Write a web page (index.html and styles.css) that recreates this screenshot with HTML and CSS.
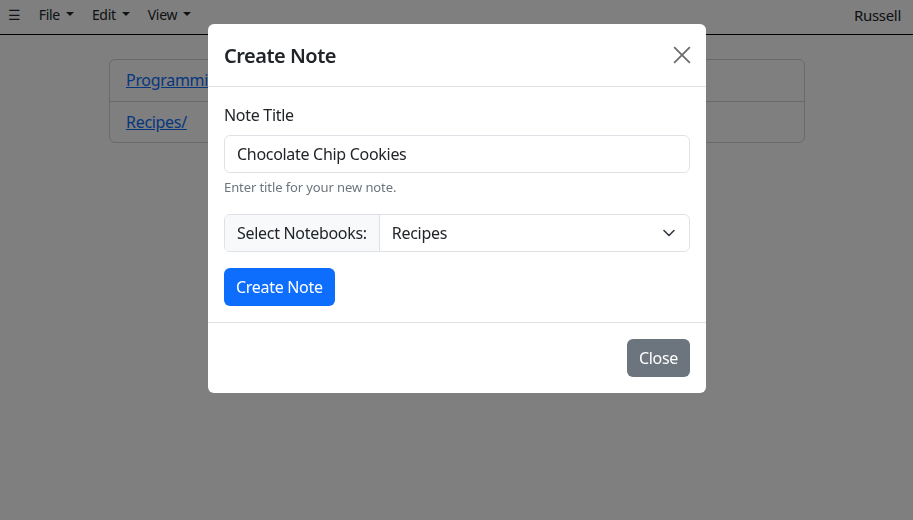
FILE: index.html
```html
<!DOCTYPE html>
<html>
<head>
<meta charset="utf-8">
<link rel="stylesheet" href="styles.css">
</head>
<body>
<nav class="topbar">
  <div class="menus">
    <span class="burger">☰</span>
    <span class="menu">File<span class="caret"></span></span>
    <span class="menu">Edit<span class="caret"></span></span>
    <span class="menu">View<span class="caret"></span></span>
  </div>
  <span class="user">Russell</span>
</nav>
<main class="content">
  <ul class="list">
    <li class="item"><a href="#">Programming/</a></li>
    <li class="item"><a href="#">Recipes/</a></li>
  </ul>
</main>
<div class="backdrop"></div>
<div class="modal">
  <div class="dialog">
    <div class="mhead">
      <h5 class="mtitle">Create Note</h5>
      <button class="xbtn" aria-label="Close">
        <svg width="16" height="16" viewBox="0 0 16 16"><path d="M1 1L15 15M15 1L1 15" stroke="#6c6c6c" stroke-width="1.6" fill="none"/></svg>
      </button>
    </div>
    <div class="mbody">
      <label class="flabel">Note Title</label>
      <div class="input">Chocolate Chip Cookies</div>
      <div class="ftext">Enter title for your new note.</div>
      <div class="igroup">
        <span class="igtext">Select Notebooks:</span>
        <span class="select">Recipes
          <svg class="chev" width="12" height="8" viewBox="0 0 12 8"><path d="M1 1.5l5 5 5-5" stroke="#343a40" stroke-width="1.6" fill="none" stroke-linecap="round" stroke-linejoin="round"/></svg>
        </span>
      </div>
      <button class="btn primary">Create Note</button>
    </div>
    <div class="mfoot">
      <button class="btn secondary">Close</button>
    </div>
  </div>
</div>
</body>
</html>
```
FILE: styles.css
```css
* { box-sizing: border-box; }
body {
  margin: 0;
  font-family: "Noto Sans", "Open Sans", sans-serif;
  font-size: 16px;
  letter-spacing: -0.3px;
  color: #212529;
  background: #fff;
  height: 520px;
}
.topbar {
  height: 35px;
  border-bottom: 1px solid #000;
  display: flex;
  align-items: flex-start;
  justify-content: space-between;
  padding: 4px 12px 0 8px;
  line-height: 22px;
}
.menus { display: flex; align-items: center; font-size: 14px; }
.burger { font-size: 14px; margin-right: 18px; }
.menu { display: inline-flex; align-items: center; margin-right: 18px; }
.caret {
  display: inline-block;
  margin-left: 6px;
  border-top: 4px solid #212529;
  border-left: 4px solid transparent;
  border-right: 4px solid transparent;
  margin-top: -2px;
}
.user { font-size: 15px; }
.content { padding: 24px 108px 0 109px; }
.list {
  list-style: none;
  margin: 0;
  padding: 0;
  border: 1px solid rgba(0,0,0,.175);
  border-radius: 6px;
}
.item { padding: 9px 16px 7px; height: 41px; }
.item + .item { border-top: 1px solid rgba(0,0,0,.175); }
.item a { color: #0d6efd; }
.backdrop {
  position: fixed;
  inset: 0;
  background: rgba(0,0,0,.5);
}
.modal {
  position: fixed;
  top: 24px;
  left: 208px;
  width: 498px;
}
.dialog {
  background: #fff;
  border-radius: 6px;
  overflow: hidden;
}
.mhead {
  height: 63px;
  display: flex;
  align-items: center;
  justify-content: space-between;
  padding: 2px 16px 0;
  border-bottom: 1px solid #dee2e6;
}
.mtitle { margin: 0; font-size: 20px; font-weight: 600; line-height: 30px; letter-spacing: -0.5px; }
.xbtn {
  border: 0; background: none; padding: 0; width: 32px; height: 32px;
  display: flex; align-items: center; justify-content: center; margin-right: -8px; margin-top: -2px;
}
.xbtn svg { width: 18px; height: 18px; }
.mbody { padding: 16px; }
.flabel { display: block; margin-bottom: 8px; line-height: 24px; }
.input {
  height: 38px;
  border: 1px solid #dee2e6;
  border-radius: 6px;
  padding: 6px 12px;
  line-height: 24px;
}
.ftext { margin-top: 4px; font-size: 13px; color: #6c757d; line-height: 21px; letter-spacing: -0.1px; }
.igroup {
  margin-top: 16px;
  display: flex;
  height: 38px;
  border: 1px solid #dee2e6;
  border-radius: 6px;
  overflow: hidden;
}
.igtext {
  background: #f8f9fa;
  padding: 6px 12px;
  line-height: 24px;
  border-right: 1px solid #dee2e6;
}
.select {
  flex: 1;
  padding: 6px 12px;
  line-height: 24px;
  display: flex;
  align-items: center;
  justify-content: space-between;
}
.chev { margin-right: 2px; }
.btn {
  border: 0;
  border-radius: 6px;
  font-family: inherit;
  font-size: 16px;
  letter-spacing: -0.3px;
  color: #fff;
  padding: 6px 12px;
  line-height: 24px;
  height: 38px;
}
.primary { background: #0d6efd; margin-top: 16px; display: block; }
.mfoot {
  border-top: 1px solid #dee2e6;
  padding: 16px;
  display: flex;
  justify-content: flex-end;
}
.secondary { background: #6c757d; }
```
